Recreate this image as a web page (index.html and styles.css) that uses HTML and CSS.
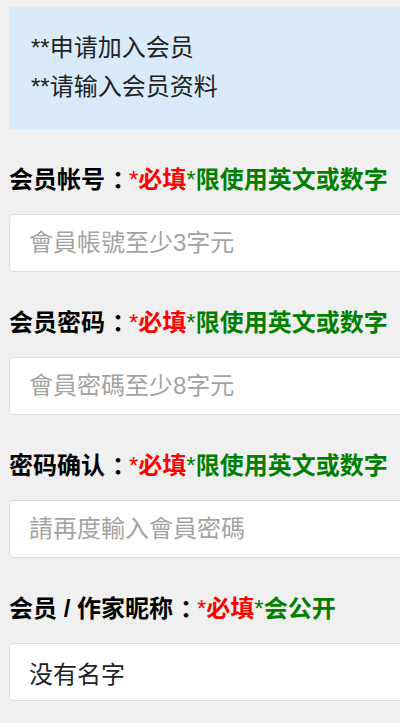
FILE: index.html
```html
<!DOCTYPE html>
<html lang="zh">
<head>
<meta charset="utf-8">
<title>申请加入会员</title>
<link rel="stylesheet" href="styles.css">
</head>
<body>
<div class="page">
  <div class="notice">
    <div class="notice-line">**申请加入会员</div>
    <div class="notice-line">**请输入会员资料</div>
  </div>

  <div class="field">
    <label class="label">会员帐号<span class="colon">：</span><span class="req"><span class="star">*</span>必填</span><span class="hint"><span class="star">*</span>限使用英文或数字</span></label>
    <input class="input" type="text" placeholder="會員帳號至少3字元">
  </div>

  <div class="field">
    <label class="label">会员密码<span class="colon">：</span><span class="req"><span class="star">*</span>必填</span><span class="hint"><span class="star">*</span>限使用英文或数字</span></label>
    <input class="input" type="password" placeholder="會員密碼至少8字元">
  </div>

  <div class="field">
    <label class="label">密码确认<span class="colon">：</span><span class="req"><span class="star">*</span>必填</span><span class="hint"><span class="star">*</span>限使用英文或数字</span></label>
    <input class="input" type="password" placeholder="請再度輸入會員密碼">
  </div>

  <div class="field">
    <label class="label">会员 / 作家昵称<span class="colon">：</span><span class="req"><span class="star">*</span>必填</span><span class="hint"><span class="star">*</span>会公开</span></label>
    <input class="input" type="text" value="没有名字">
  </div>
</div>
</body>
</html>
```

FILE: styles.css
```css
html {
  overflow: hidden;
}

body {
  margin: 0;
  background: #f0f0f0;
  font-family: "Liberation Sans", "Noto Sans CJK SC", sans-serif;
  color: #111;
}

.page {
  margin: 0 -30px 0 9px;
  padding-top: 7px;
}

.notice {
  background: #d9eafa;
  padding: 21px 22px 22px;
  height: 122px;
  box-sizing: border-box;
}

.notice-line {
  font-size: 24px;
  line-height: 39px;
  color: #222;
}

.field {
  margin-top: 34px;
  display: flex;
  flex-direction: column;
  gap: 17px;
}

.label {
  display: block;
  font-size: 24px;
  line-height: 34px;
  height: 34px;
  font-weight: bold;
  color: #000;
  white-space: nowrap;
}

.colon {
  padding-left: 7px;
  letter-spacing: -7px;
}

.star {
  font-weight: normal;
}

.req {
  color: #ff0000;
}

.hint {
  color: #008000;
}

.input {
  display: block;
  width: 100%;
  height: 58px;
  box-sizing: border-box;
  margin: 0;
  padding: 0 19px;
  border: 1px solid #dcdcdc;
  border-radius: 5px;
  background: #fff;
  font-family: "Liberation Sans", "Noto Sans CJK SC", sans-serif;
  font-size: 24px;
  color: #222;
  outline: none;
}

.input::placeholder {
  color: #a3a3a3;
  opacity: 1;
}
```
